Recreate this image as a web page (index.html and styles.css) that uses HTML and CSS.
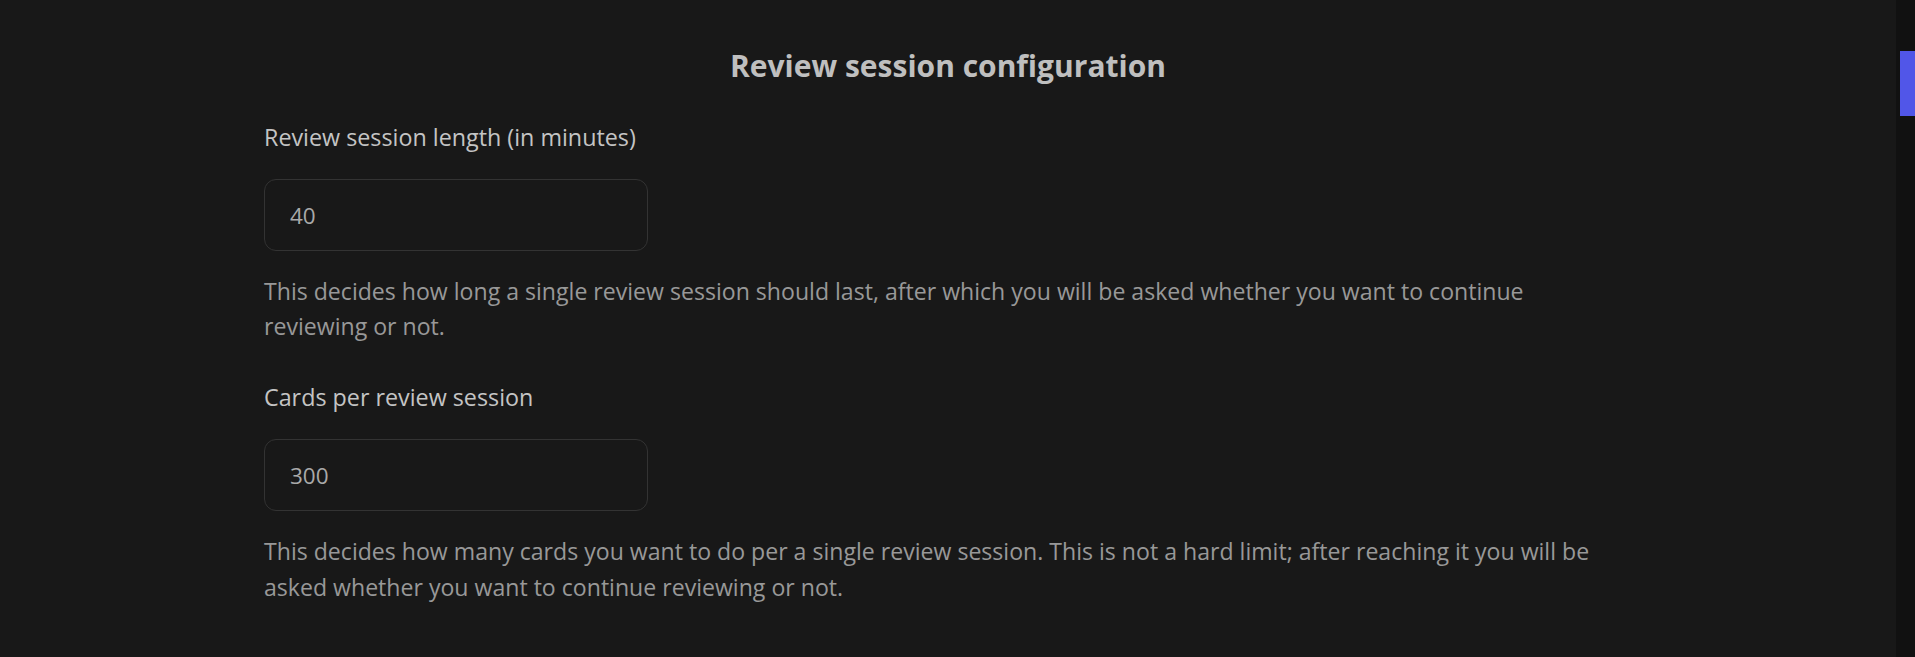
FILE: index.html
```html
<!DOCTYPE html>
<html lang="en">
<head>
<meta charset="utf-8">
<title>Review session configuration</title>
<link rel="stylesheet" href="styles.css">
</head>
<body>
  <main class="page">
    <section class="settings">
      <h2 class="settings-title">Review session configuration</h2>
      <div class="field">
        <label class="field-label" for="len">Review session length (in minutes)</label>
        <input class="field-input" id="len" type="text" value="40">
        <p class="field-help">This decides how long a single review session should last, after which you will be asked whether you want to continue reviewing or not.</p>
      </div>
      <div class="field">
        <label class="field-label" for="cards">Cards per review session</label>
        <input class="field-input" id="cards" type="text" value="300">
        <p class="field-help">This decides how many cards you want to do per a single review session. This is not a hard limit; after reaching it you will be asked whether you want to continue reviewing or not.</p>
      </div>
    </section>
  </main>
  <aside class="scrollbar"><div class="scrollbar-thumb"></div></aside>
</body>
</html>
```

FILE: styles.css
```css
html, body {
  margin: 0;
  padding: 0;
  height: 100%;
}
body {
  display: flex;
  background: #181818;
  overflow: hidden;
  font-family: "Open Sans", "Noto Sans", sans-serif;
}
.page {
  flex: 1;
  display: flex;
  justify-content: center;
  padding-top: 48px;
}
.settings {
  width: 1368px;
  display: flex;
  flex-direction: column;
  gap: 35px;
}
.settings-title {
  margin: 0;
  text-align: center;
  font-size: 30px;
  line-height: 36px;
  font-weight: 700;
  color: #bfbfbf;
}
.field {
  display: flex;
  flex-direction: column;
  align-items: flex-start;
}
.field-label {
  font-size: 23.3px;
  line-height: 36px;
  color: #c4c4c4;
}
.field-input {
  margin-top: 24px;
  box-sizing: border-box;
  width: 384px;
  height: 72px;
  padding: 0 25px;
  border: 1px solid #333333;
  border-radius: 12px;
  background: #181818;
  color: #a9a9a9;
  font-family: inherit;
  font-size: 22.5px;
  outline: none;
}
.field-help {
  margin: 23px 0 0;
  font-size: 23.1px;
  line-height: 35.2px;
  color: #989898;
}
.scrollbar {
  width: 19px;
  background: #111111;
  display: flex;
  flex-direction: column;
  align-items: flex-end;
}
.scrollbar-thumb {
  margin-top: 51px;
  width: 15px;
  height: 65px;
  background: #5156e8;
}
```
